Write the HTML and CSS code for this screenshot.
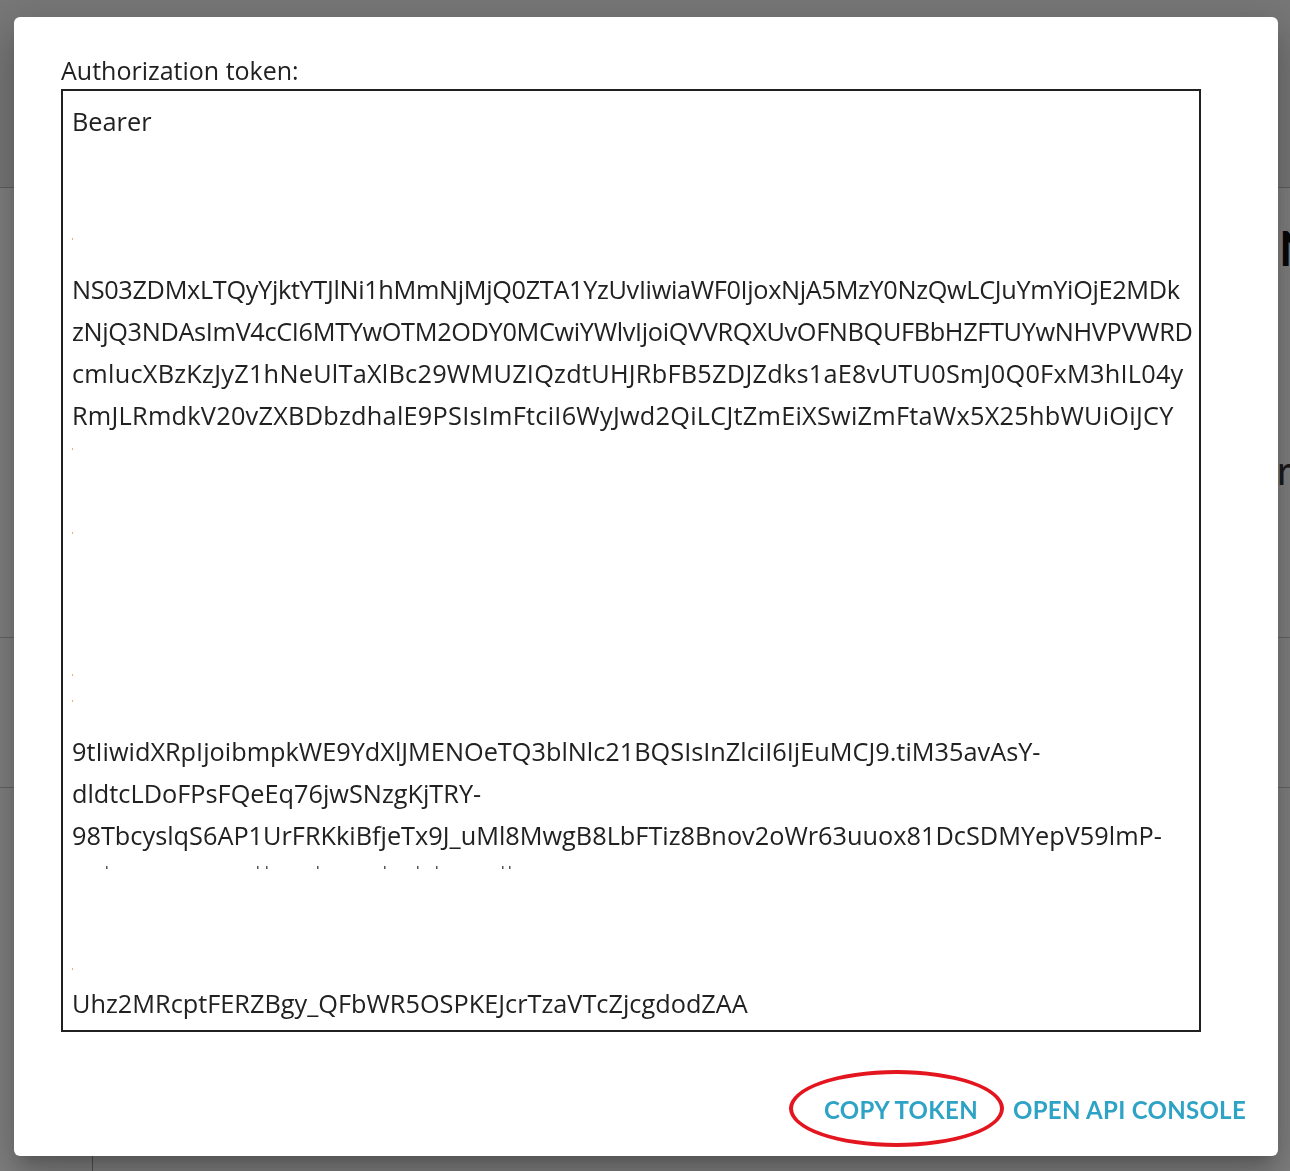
FILE: index.html
```html
<!DOCTYPE html>
<html lang="en">
<head>
  <meta charset="UTF-8">
  <meta name="viewport" content="width=device-width, initial-scale=1.0">
  <title>Authorization token</title>
  <link rel="stylesheet" href="styles.css">
</head>
<body>
  <!-- Page behind the dialog -->
  <div class="page">
    <header class="page-header"></header>
    <section class="page-row row-a">
      <h2 class="page-title">N</h2>
      <p class="page-text">r</p>
    </section>
    <section class="page-row row-b"></section>
    <section class="page-row row-c"><div class="page-col"></div></section>
  </div>

  <!-- Token dialog -->
  <div class="backdrop">
    <div class="dialog">
      <div class="dialog-content">
        <label class="token-label" for="token">Authorization token:</label>
        <div class="token-box" id="token">
          <div class="line">Bearer</div>
          <div class="line"></div>
          <div class="line"></div>
          <div class="line"><span class="dot"></span></div>
          <div class="line tight">NS03ZDMxLTQyYjktYTJlNi1hMmNjMjQ0ZTA1YzUvIiwiaWF0IjoxNjA5MzY0NzQwLCJuYmYiOjE2MDk</div>
          <div class="line tight">zNjQ3NDAsImV4cCI6MTYwOTM2ODY0MCwiYWlvIjoiQVVRQXUvOFNBQUFBbHZFTUYwNHVPVWRD</div>
          <div class="line loose">cmlucXBzKzJyZ1hNeUlTaXlBc29WMUZIQzdtUHJRbFB5ZDJZdks1aE8vUTU0SmJ0Q0FxM3hIL04y</div>
          <div class="line loose">RmJLRmdkV20vZXBDbzdhalE9PSIsImFtciI6WyJwd2QiLCJtZmEiXSwiZmFtaWx5X25hbWUiOiJCY</div>
          <div class="line"><span class="dot"></span></div>
          <div class="line"></div>
          <div class="line"><span class="dot"></span></div>
          <div class="line"></div>
          <div class="line"></div>
          <div class="line"><span class="dot low"></span></div>
          <div class="line"><span class="dot"></span></div>
          <div class="line">9tIiwidXRpIjoibmpkWE9YdXlJMENOeTQ3blNlc21BQSIsInZlciI6IjEuMCJ9.tiM35avAsY-</div>
          <div class="line">dldtcLDoFPsFQeEq76jwSNzgKjTRY-</div>
          <div class="line">98TbcyslqS6AP1UrFRKkiBfjeTx9J_uMl8MwgB8LbFTiz8Bnov2oWr63uuox81DcSDMYepV59lmP-</div>
          <div class="line">
            <!-- tops of a clipped line -->
            <svg class="frag" width="460" height="4" viewBox="0 0 460 4">
              <rect x="34" y="0" width="1.5" height="3" fill="#555"/>
              <rect x="185" y="0" width="1.5" height="3" fill="#555"/>
              <rect x="194" y="0" width="1.5" height="3" fill="#555"/>
              <rect x="245" y="0" width="1.5" height="3" fill="#555"/>
              <rect x="312" y="0" width="1.5" height="3" fill="#555"/>
              <rect x="345" y="0" width="1.5" height="3" fill="#555"/>
              <rect x="364" y="0" width="1.5" height="3" fill="#555"/>
              <rect x="430" y="0" width="1.5" height="3" fill="#555"/>
              <rect x="437" y="0" width="1.5" height="3" fill="#555"/>
            </svg>
          </div>
          <div class="line"></div>
          <div class="line"><span class="dot low"></span></div>
          <div class="line">Uhz2MRcptFERZBgy_QFbWR5OSPKEJcrTzaVTcZjcgdodZAA</div>
        </div>
      </div>
      <div class="dialog-actions">
        <button class="action action-copy">Copy token</button>
        <button class="action">Open API console</button>
      </div>
    </div>
  </div>
</body>
</html>
```

FILE: styles.css
```css
* {
  margin: 0;
  padding: 0;
  box-sizing: border-box;
}

body {
  font-family: "Open Sans", "Noto Sans", Arial, sans-serif;
  background: #fff;
  color: #212121;
  height: 100vh;
  overflow: hidden;
}

/* Page behind the dialog */
.page-header {
  height: 188px;
  background: #eeeeee;
  border-bottom: 1px solid #bdbdbd;
}

.page-row {
  border-bottom: 1px solid #c8c8c8;
}

.row-a {
  height: 450px;
  padding-top: 36px;
}

.row-b {
  height: 150px;
}

.row-c {
  height: 400px;
  border-bottom: none;
}

.page-col {
  margin-left: 92px;
  height: 100%;
  border-left: 1px solid #9e9e9e;
}

.page-title {
  margin-left: 1279px;
  font-family: Lato, Arial, sans-serif;
  font-size: 48px;
  line-height: 48px;
  font-weight: 700;
  color: #111;
}

.page-text {
  margin-left: 1277px;
  margin-top: 178px;
  font-family: Lato, Arial, sans-serif;
  font-size: 40px;
  line-height: 40px;
  color: #333;
}

/* Dialog */
.backdrop {
  position: fixed;
  inset: 0;
  background: rgba(0, 0, 0, 0.5);
  display: flex;
  justify-content: center;
  align-items: center;
}

.dialog {
  width: 1264px;
  height: 1139px;
  margin-top: 2px;
  margin-left: 2px;
  background: #fff;
  border-radius: 6px;
  display: flex;
  flex-direction: column;
  box-shadow:
    0 11px 15px -7px rgba(0, 0, 0, 0.2),
    0 24px 38px 3px rgba(0, 0, 0, 0.14),
    0 9px 46px 8px rgba(0, 0, 0, 0.12);
}

.dialog-content {
  padding: 34px 0 0 47px;
}

.token-label {
  display: block;
  font-size: 25px;
  line-height: 38px;
  color: #212121;
}

.token-box {
  width: 1140px;
  height: 943px;
  border: 2px solid #212121;
  padding: 9px 0 0 9px;
  overflow: hidden;
}

.line {
  display: flow-root;
  height: 42px;
  line-height: 42px;
  font-size: 25.3px;
  white-space: nowrap;
  color: #212121;
}

.line.tight {
  letter-spacing: -0.34px;
}

.line.loose {
  letter-spacing: 0.25px;
}

.dot {
  display: block;
  width: 1px;
  height: 2px;
  margin-top: 12px;
  background: #f0b060;
}

.dot.low {
  margin-top: 28px;
}

.frag {
  display: block;
  margin-top: 10px;
}

.dialog-actions {
  flex: 1;
  display: flex;
  justify-content: flex-end;
  align-items: flex-end;
  gap: 35px;
  padding: 0 32px 30px 0;
}

.action {
  font-family: Lato, "Noto Sans", Arial, sans-serif;
  font-size: 24px;
  line-height: 32px;
  font-weight: 700;
  letter-spacing: 0.3px;
  text-transform: uppercase;
  color: #2ea3c6;
  background: none;
  border: none;
  cursor: pointer;
  position: relative;
}

/* Red marker round the copy button */
.action-copy::after {
  content: '';
  position: absolute;
  left: -35px;
  top: -24px;
  width: 215px;
  height: 77px;
  box-sizing: border-box;
  border: 4px solid #e3151f;
  border-radius: 50%;
}
```
